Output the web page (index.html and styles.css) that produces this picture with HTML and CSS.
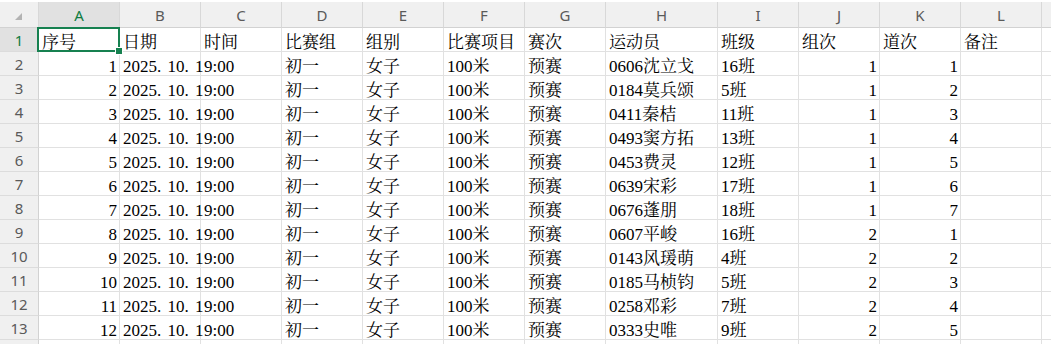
FILE: index.html
```html
<!DOCTYPE html>
<html lang="zh-CN">
<head>
<meta charset="utf-8">
<title>Sheet</title>
<link rel="stylesheet" href="styles.css">
</head>
<body>
<div class="sheet">
  <div class="hd corner"><svg class="tri" width="8" height="8" viewBox="0 0 8 8"><polygon points="7,0 7,7 0,7" fill="#b3b3b3"/></svg></div>
  <div class="hd col sel">A</div><div class="hd col">B</div><div class="hd col">C</div><div class="hd col">D</div><div class="hd col">E</div><div class="hd col">F</div><div class="hd col">G</div><div class="hd col">H</div><div class="hd col">I</div><div class="hd col">J</div><div class="hd col">K</div><div class="hd col">L</div><div class="hd col"></div>

  <div class="rh sel">1</div><div class="c">序号</div><div class="c">日期</div><div class="c">时间</div><div class="c">比赛组</div><div class="c">组别</div><div class="c">比赛项目</div><div class="c">赛次</div><div class="c">运动员</div><div class="c">班级</div><div class="c">组次</div><div class="c">道次</div><div class="c">备注</div><div class="c"></div>

  <div class="rh">2</div><div class="c n">1</div><div class="c">2025<span class="dot">.</span>10<span class="dot">.</span>1</div><div class="c">9:00</div><div class="c">初一</div><div class="c">女子</div><div class="c">100米</div><div class="c">预赛</div><div class="c">0606沈立戈</div><div class="c">16班</div><div class="c n">1</div><div class="c n">1</div><div class="c"></div><div class="c"></div>
  <div class="rh">3</div><div class="c n">2</div><div class="c">2025<span class="dot">.</span>10<span class="dot">.</span>1</div><div class="c">9:00</div><div class="c">初一</div><div class="c">女子</div><div class="c">100米</div><div class="c">预赛</div><div class="c">0184莫兵颂</div><div class="c">5班</div><div class="c n">1</div><div class="c n">2</div><div class="c"></div><div class="c"></div>
  <div class="rh">4</div><div class="c n">3</div><div class="c">2025<span class="dot">.</span>10<span class="dot">.</span>1</div><div class="c">9:00</div><div class="c">初一</div><div class="c">女子</div><div class="c">100米</div><div class="c">预赛</div><div class="c">0411秦桔</div><div class="c">11班</div><div class="c n">1</div><div class="c n">3</div><div class="c"></div><div class="c"></div>
  <div class="rh">5</div><div class="c n">4</div><div class="c">2025<span class="dot">.</span>10<span class="dot">.</span>1</div><div class="c">9:00</div><div class="c">初一</div><div class="c">女子</div><div class="c">100米</div><div class="c">预赛</div><div class="c">0493窦方拓</div><div class="c">13班</div><div class="c n">1</div><div class="c n">4</div><div class="c"></div><div class="c"></div>
  <div class="rh">6</div><div class="c n">5</div><div class="c">2025<span class="dot">.</span>10<span class="dot">.</span>1</div><div class="c">9:00</div><div class="c">初一</div><div class="c">女子</div><div class="c">100米</div><div class="c">预赛</div><div class="c">0453费灵</div><div class="c">12班</div><div class="c n">1</div><div class="c n">5</div><div class="c"></div><div class="c"></div>
  <div class="rh">7</div><div class="c n">6</div><div class="c">2025<span class="dot">.</span>10<span class="dot">.</span>1</div><div class="c">9:00</div><div class="c">初一</div><div class="c">女子</div><div class="c">100米</div><div class="c">预赛</div><div class="c">0639宋彩</div><div class="c">17班</div><div class="c n">1</div><div class="c n">6</div><div class="c"></div><div class="c"></div>
  <div class="rh">8</div><div class="c n">7</div><div class="c">2025<span class="dot">.</span>10<span class="dot">.</span>1</div><div class="c">9:00</div><div class="c">初一</div><div class="c">女子</div><div class="c">100米</div><div class="c">预赛</div><div class="c">0676蓬朋</div><div class="c">18班</div><div class="c n">1</div><div class="c n">7</div><div class="c"></div><div class="c"></div>
  <div class="rh">9</div><div class="c n">8</div><div class="c">2025<span class="dot">.</span>10<span class="dot">.</span>1</div><div class="c">9:00</div><div class="c">初一</div><div class="c">女子</div><div class="c">100米</div><div class="c">预赛</div><div class="c">0607平峻</div><div class="c">16班</div><div class="c n">2</div><div class="c n">1</div><div class="c"></div><div class="c"></div>
  <div class="rh">10</div><div class="c n">9</div><div class="c">2025<span class="dot">.</span>10<span class="dot">.</span>1</div><div class="c">9:00</div><div class="c">初一</div><div class="c">女子</div><div class="c">100米</div><div class="c">预赛</div><div class="c">0143风瑗萌</div><div class="c">4班</div><div class="c n">2</div><div class="c n">2</div><div class="c"></div><div class="c"></div>
  <div class="rh">11</div><div class="c n">10</div><div class="c">2025<span class="dot">.</span>10<span class="dot">.</span>1</div><div class="c">9:00</div><div class="c">初一</div><div class="c">女子</div><div class="c">100米</div><div class="c">预赛</div><div class="c">0185马桢钧</div><div class="c">5班</div><div class="c n">2</div><div class="c n">3</div><div class="c"></div><div class="c"></div>
  <div class="rh">12</div><div class="c n">11</div><div class="c">2025<span class="dot">.</span>10<span class="dot">.</span>1</div><div class="c">9:00</div><div class="c">初一</div><div class="c">女子</div><div class="c">100米</div><div class="c">预赛</div><div class="c">0258邓彩</div><div class="c">7班</div><div class="c n">2</div><div class="c n">4</div><div class="c"></div><div class="c"></div>
  <div class="rh">13</div><div class="c n">12</div><div class="c">2025<span class="dot">.</span>10<span class="dot">.</span>1</div><div class="c">9:00</div><div class="c">初一</div><div class="c">女子</div><div class="c">100米</div><div class="c">预赛</div><div class="c">0333史唯</div><div class="c">9班</div><div class="c n">2</div><div class="c n">5</div><div class="c"></div><div class="c"></div>
  <div class="rh"></div><div class="c"></div><div class="c"></div><div class="c"></div><div class="c"></div><div class="c"></div><div class="c"></div><div class="c"></div><div class="c"></div><div class="c"></div><div class="c"></div><div class="c"></div><div class="c"></div><div class="c"></div>

  <div class="selbox"></div>
  <div class="handle"></div>
</div>
</body>
</html>
```
FILE: styles.css
```css
html, body {
  margin: 0;
  padding: 0;
  background: #ffffff;
  overflow: hidden;
}
.sheet {
  position: relative;
  width: 1051px;
  height: 344px;
  overflow: hidden;
  display: grid;
  grid-template-columns: 39px repeat(7, 81px) 112px repeat(4, 81px) 40px;
  grid-template-rows: 28px repeat(14, 24px);
}
.hd {
  box-sizing: border-box;
  margin-top: 2px;
  height: 26px;
  background: #f0f0f0;
  border-right: 1px solid #d8d8d8;
  border-bottom: 1px solid #d2d2d2;
  display: flex;
  align-items: center;
  justify-content: center;
  font-family: "Noto Sans", "Open Sans", sans-serif;
  font-size: 15px;
  color: #5a5a5a;
}
.corner {
  padding: 5px 1px 0 0;
}
.tri {
  display: block;
}
.hd.sel {
  background: #e1e1e1;
  color: #107c41;
}
.rh {
  box-sizing: border-box;
  height: 24px;
  background: #f0f0f0;
  border-right: 1px solid #d2d2d2;
  border-bottom: 1px solid #dcdcdc;
  display: flex;
  align-items: center;
  justify-content: center;
  font-family: "Noto Sans", "Open Sans", sans-serif;
  font-size: 15px;
  color: #5a5a5a;
}
.rh.sel {
  background: #e1e1e1;
  color: #107c41;
}
.c {
  box-sizing: border-box;
  height: 24px;
  padding: 6px 2px 0 3px;
  border-right: 1px solid #e1e1e1;
  border-bottom: 1px solid #e1e1e1;
  font-family: "Liberation Serif", "Noto Serif CJK SC", "Noto Sans CJK SC", serif;
  font-size: 17px;
  line-height: 17px;
  color: #000;
  white-space: nowrap;
  overflow: visible;
}
.n {
  text-align: right;
}
.dot {
  display: inline-block;
  width: 10.5px;
}
.selbox {
  position: absolute;
  left: 37px;
  top: 27px;
  width: 83px;
  height: 25px;
  box-sizing: border-box;
  border: 2px solid #168150;
  pointer-events: none;
}
.handle {
  position: absolute;
  left: 115px;
  top: 47px;
  width: 8px;
  height: 8px;
  box-sizing: border-box;
  background: #168150;
  border: 1px solid #ffffff;
}
```
